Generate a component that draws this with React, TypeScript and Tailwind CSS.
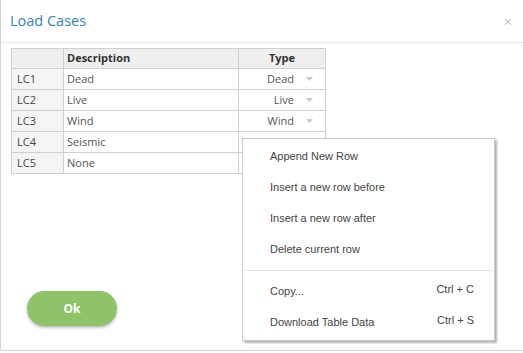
const rows = [
  { id: 'LC1', desc: 'Dead', type: 'Dead' },
  { id: 'LC2', desc: 'Live', type: 'Live' },
  { id: 'LC3', desc: 'Wind', type: 'Wind' },
  { id: 'LC4', desc: 'Seismic', type: '' },
  { id: 'LC5', desc: 'None', type: '' },
];

const menuItems = [
  'Append New Row',
  'Insert a new row before',
  'Insert a new row after',
  'Delete current row',
];

function Caret() {
  return (
    <svg width="7" height="4" viewBox="0 0 7 4" className="ml-[12px]">
      <path d="M0 0 L7 0 L3.5 4 Z" fill="#c8c8c8" />
    </svg>
  );
}

export default function App() {
  return (
    <div className="relative h-[353px] w-[523px] overflow-hidden bg-white font-['Open_Sans',sans-serif]">
      <div className="flex h-[351px] flex-col border-b border-l border-[#d4d4d4]">
        {/* Header */}
        <div className="flex h-[43px] shrink-0 items-center justify-between border-b border-[#e8e8e8] pl-[9px] pr-[11px] shadow-[0_1px_2px_rgba(0,0,0,0.04)]">
          <span className="text-[14.5px] text-[#3682bd]">Load Cases</span>
          <span className="text-[15px] leading-none text-[#c4c4c4]">×</span>
        </div>

        {/* Grid */}
        <div className="pl-[10px] pt-[5px]">
          <table className="border-collapse text-[11px] text-[#555]">
            <thead>
              <tr className="h-[20px] bg-[#efefef] text-[#333]">
                <th className="w-[52px] border border-[#d0d0d0]" />
                <th className="w-[175px] border border-[#d0d0d0] pl-[3px] text-left font-bold">Description</th>
                <th className="w-[87px] border border-[#d0d0d0] text-center font-bold">Type</th>
              </tr>
            </thead>
            <tbody>
              {rows.map((r) => (
                <tr key={r.id} className="h-[21px]">
                  <td className="border border-[#d0d0d0] bg-[#f4f4f4] pl-[5px] text-[#444]">{r.id}</td>
                  <td className="border border-[#d0d0d0] pl-[3px]">{r.desc}</td>
                  <td className="border border-[#d0d0d0] pr-[12px]">
                    {r.type && (
                      <div className="flex items-center justify-end">
                        <span>{r.type}</span>
                        <Caret />
                      </div>
                    )}
                  </td>
                </tr>
              ))}
            </tbody>
          </table>
        </div>

        {/* Footer */}
        <div className="mt-[117px] pl-[26px]">
          <button className="h-[35px] w-[90px] rounded-full bg-[#8fc36b] text-[12px] font-bold text-white shadow-[0_2px_3px_rgba(0,0,0,0.25)]">
            Ok
          </button>
        </div>
      </div>

      {/* Context menu */}
      <div className="absolute left-[242px] top-[138px] w-[253px] border border-[#c8c8c8] bg-white pb-[4px] font-['Liberation_Sans',Arial,sans-serif] text-[11px] text-[#444] shadow-[2px_2px_2px_rgba(0,0,0,0.3)]">
        <div className="pt-[2px]">
          {menuItems.map((m) => (
            <div key={m} className="flex h-[31px] items-center pl-[27px]">
              {m}
            </div>
          ))}
        </div>
        <div className="mx-[1px] mt-[5px] border-t border-[#e3e3e3]" />
        <div className="pt-[3px]">
          <div className="flex h-[31px] items-center justify-between pl-[27px] pr-[20px]">
            <span className="pt-[4px]">Copy...</span>
            <span>Ctrl + C</span>
          </div>
          <div className="flex h-[31px] items-center justify-between pl-[27px] pr-[20px]">
            <span className="pt-[4px]">Download Table Data</span>
            <span>Ctrl + S</span>
          </div>
        </div>
      </div>
    </div>
  );
}
